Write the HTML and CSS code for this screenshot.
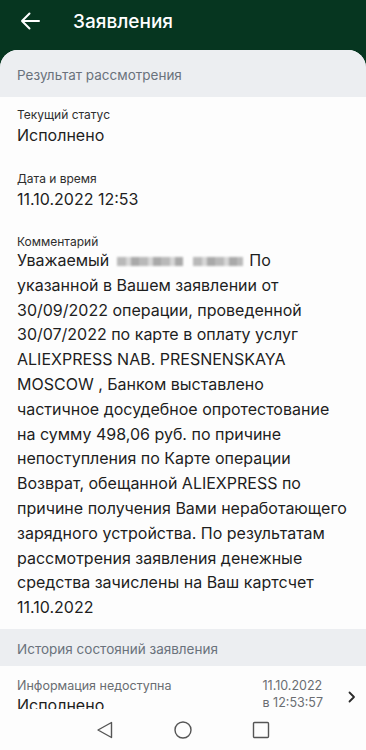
FILE: index.html
```html
<!DOCTYPE html>
<html lang="ru">
<head>
<meta charset="utf-8">
<title>Заявления</title>
<link rel="stylesheet" href="styles.css">
</head>
<body>
<div class="screen">
  <header class="topbar">
    <svg class="back" width="20" height="18" viewBox="0 0 20 18" aria-hidden="true">
      <path d="M19 9H2M9.5 1.5L2 9l7.5 7.5" fill="none" stroke="#fff" stroke-width="2" stroke-linecap="round" stroke-linejoin="round"/>
    </svg>
    <h1 class="title">Заявления</h1>
  </header>
  <main class="card">
    <div class="band band-top">Результат рассмотрения</div>
    <section class="fields">
      <div class="field">
        <div class="label">Текущий статус</div>
        <div class="value">Исполнено</div>
      </div>
      <div class="field">
        <div class="label">Дата и время</div>
        <div class="value">11.10.2022 12:53</div>
      </div>
      <div class="field">
        <div class="label label-tight">Комментарий</div>
        <p class="comment">Уважаемый <span class="blur"><span class="b1"></span><span class="b2"></span></span> По указанной в Вашем заявлении от 30/09/2022 операции, проведенной 30/07/2022 по карте в оплату услуг ALIEXPRESS NAB. PRESNENSKAYA MOSCOW , Банком выставлено частичное досудебное опротестование на сумму 498,06 руб. по причине непоступления по Карте операции Возврат, обещанной ALIEXPRESS по причине получения Вами неработающего зарядного устройства. По результатам рассмотрения заявления денежные средства зачислены на Ваш картсчет 11.10.2022</p>
      </div>
    </section>
    <div class="band band-bottom">История состояний заявления</div>
    <div class="history-row">
      <div class="h-left">
        <div class="h-label">Информация недоступна</div>
        <div class="h-value">Исполнено</div>
      </div>
      <div class="h-date">
        <div>11.10.2022</div>
        <div>в 12:53:57</div>
      </div>
      <svg class="chev" width="8" height="12" viewBox="0 0 8 12" aria-hidden="true">
        <path d="M1.5 1.5L6 6l-4.5 4.5" fill="none" stroke="#2b2b2b" stroke-width="1.8" stroke-linecap="round" stroke-linejoin="round"/>
      </svg>
    </div>
  </main>
  <nav class="navbar">
    <svg width="18" height="18" viewBox="0 0 18 18" aria-hidden="true"><path d="M15.5 1.5v15L2 9z" fill="none" stroke="#555" stroke-width="1.4" stroke-linejoin="round"/></svg>
    <svg width="18" height="18" viewBox="0 0 18 18" aria-hidden="true"><circle cx="9" cy="9" r="8" fill="none" stroke="#555" stroke-width="1.4"/></svg>
    <svg width="18" height="18" viewBox="0 0 18 18" aria-hidden="true"><rect x="1.5" y="1.5" width="15" height="15" rx="1" fill="none" stroke="#555" stroke-width="1.4"/></svg>
  </nav>
</div>
</body>
</html>
```
FILE: styles.css
```css
* { box-sizing: border-box; }
html, body { margin: 0; padding: 0; }
body {
  width: 366px;
  height: 750px;
  overflow: hidden;
  font-family: Inter, Roboto, "Noto Sans", sans-serif;
  background: #063620;
}
.screen {
  position: relative;
  width: 366px;
  height: 750px;
  overflow: hidden;
  display: flex;
  flex-direction: column;
}
.topbar {
  height: 50px;
  flex: none;
  display: flex;
  align-items: center;
  padding-left: 20px;
  padding-bottom: 8px;
  background: #063620;
}
.back { display: block; }
.title {
  margin: 0 0 0 33px;
  font-size: 19px;
  font-weight: 500;
  color: #fff;
}
.card {
  flex: 1;
  background: #fdfdfd;
  border-radius: 18px 18px 0 0;
  overflow: hidden;
}
.band {
  background: #eceef1;
  color: #6a727c;
  font-size: 13.5px;
  padding-left: 17px;
  display: flex;
  align-items: center;
}
.band-top { height: 47px; padding-top: 2px; }
.band-bottom { height: 37px; padding-top: 3px; }
.fields {
  padding: 10px 17px 9px 17px;
  display: flex;
  flex-direction: column;
  gap: 26px;
}
.label {
  font-size: 12px;
  line-height: 16px;
  color: #2e2e2e;
}
.label-tight {
  line-height: 8px;
  margin-top: 3px;
}
.value {
  margin-top: 2px;
  font-size: 16px;
  line-height: 20px;
  color: #1e1e1e;
}
.comment {
  margin: 2px 0 0 0;
  font-size: 16px;
  line-height: 24.8px;
  color: #1e1e1e;
}
.blur {
  display: inline-flex;
  gap: 10px;
  vertical-align: middle;
  margin: 0 2px 0 3px;
  filter: blur(1.2px);
}
.blur span {
  display: inline-block;
  height: 9px;
  background: repeating-linear-gradient(90deg, #b9b9b9 0 9px, #d6d6d6 9px 14px, #a9a9a9 14px 22px);
}
.b1 { width: 66px; }
.b2 { width: 50px; }
.history-row {
  display: flex;
  align-items: flex-start;
  padding: 11px 10px 0 17px;
}
.h-left { flex: 1; }
.h-label {
  font-size: 12.5px;
  line-height: 18px;
  color: #6a6d72;
}
.h-value {
  font-size: 16px;
  line-height: 20px;
  color: #1e1e1e;
}
.h-date {
  font-size: 12.5px;
  line-height: 17px;
  color: #6a6d72;
  margin-right: 25px;
}
.chev { margin-top: 14px; }
.navbar {
  position: absolute;
  left: 0;
  right: 0;
  bottom: 0;
  height: 41px;
  background: #fdfdfd;
  display: flex;
  align-items: center;
  justify-content: center;
  gap: 60px;
  padding-top: 1px;
}
```
